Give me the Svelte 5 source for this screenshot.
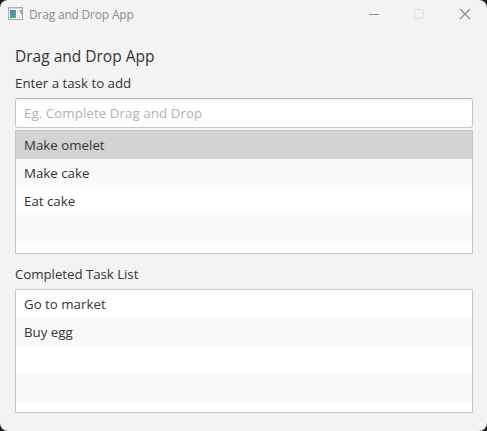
<script>
  const tasks = ['Make omelet', 'Make cake', 'Eat cake', '', ''];
  const completed = ['Go to market', 'Buy egg', '', '', ''];
</script>

{#snippet list(items, selected)}
  <ul class="list">
    {#each items as item, i}
      <li class:selected={i === selected}>{item}</li>
    {/each}
  </ul>
{/snippet}

<div class="window">
  <header>
    <svg class="app-icon" width="16" height="14" viewBox="0 0 16 14">
      <defs>
        <linearGradient id="pane" x1="0" y1="0" x2="1" y2="1">
          <stop offset="0" stop-color="#4a86a8" />
          <stop offset="1" stop-color="#5cae8a" />
        </linearGradient>
      </defs>
      <rect x="0.5" y="0.5" width="14" height="12" fill="#f7f7f8" stroke="#a9acb8" />
      <rect x="1" y="1" width="13" height="1" fill="#cfd4df" />
      <rect x="2" y="3" width="6" height="8" fill="url(#pane)" />
      <rect x="9" y="3" width="3" height="3" fill="#e4e6e8" />
      <rect x="9" y="7" width="3" height="4" fill="#e9eaeb" />
      <path d="M12 3h2v5l-1-1z" fill="#6ba398" />
    </svg>
    <span class="caption">Drag and Drop App</span>
    <div class="controls">
      <svg width="46" height="28" viewBox="0 0 46 28"><path d="M18 14.5h10" stroke="#8e8e8e" /></svg>
      <svg width="46" height="28" viewBox="0 0 46 28"><rect x="17.5" y="9.5" width="9" height="9" rx="0.8" fill="none" stroke="#dedede" /></svg>
      <svg width="46" height="28" viewBox="0 0 46 28"><path d="M17 9l10 10M27 9l-10 10" stroke="#8a8a8a" stroke-width="1.1" /></svg>
    </div>
  </header>
  <main>
    <h1>Drag and Drop App</h1>
    <label for="task">Enter a task to add</label>
    <input id="task" placeholder="Eg. Complete Drag and Drop" />
    {@render list(tasks, 0)}
    <h2>Completed Task List</h2>
    {@render list(completed, -1)}
  </main>
</div>

<style>
  :global(body) {
    margin: 0;
    background: #202020;
  }
  .window {
    width: 487px;
    height: 431px;
    box-sizing: border-box;
    border-radius: 8px;
    overflow: hidden;
    background: #f3f3f3;
    font-family: 'Open Sans', 'Noto Sans', sans-serif;
    font-size: 13.3px;
    color: #333;
  }
  header {
    display: flex;
    height: 28px;
    padding-left: 8px;
  }
  .app-icon {
    margin-top: 7px;
  }
  .caption {
    margin-left: 5px;
    line-height: 30px;
    font-size: 12px;
    color: #8c8c8c;
    letter-spacing: -0.2px;
    white-space: nowrap;
  }
  .controls {
    display: flex;
    margin-left: auto;
    margin-right: -2px;
  }
  .controls svg {
    position: relative;
    left: 0;
  }
  main {
    display: flex;
    flex-direction: column;
    padding: 18px 14px 0 15px;
  }
  h1, h2, label {
    margin: 0;
    font-weight: 400;
    white-space: nowrap;
  }
  h1 {
    height: 27px;
    line-height: 20px;
    font-size: 15.5px;
  }
  label {
    height: 25px;
    line-height: 20px;
  }
  input {
    box-sizing: border-box;
    width: 458px;
    height: 30px;
    margin: 0 0 2px;
    padding: 0 8px;
    border: 1px solid #c8c8c8;
    border-top-color: #b5b5b5;
    border-radius: 3px;
    outline: none;
    background: linear-gradient(#f3f3f3, #fff 4px);
    font: inherit;
  }
  input::placeholder {
    color: #b2b2b2;
    opacity: 1;
    letter-spacing: 0.07px;
  }
  .list {
    box-sizing: border-box;
    width: 458px;
    height: 124px;
    margin: 0;
    padding: 0;
    overflow: hidden;
    list-style: none;
    border: 1px solid #c8c8c8;
    background: #fff;
  }
  li {
    height: 28px;
    padding-left: 8px;
    line-height: 28px;
    white-space: nowrap;
  }
  li:nth-child(even) {
    background: #f9f9f9;
  }
  li.selected {
    background: #d3d3d3;
  }
  h2 {
    height: 35px;
    line-height: 40px;
    font-size: 13.3px;
    letter-spacing: -0.05px;
  }
</style>
